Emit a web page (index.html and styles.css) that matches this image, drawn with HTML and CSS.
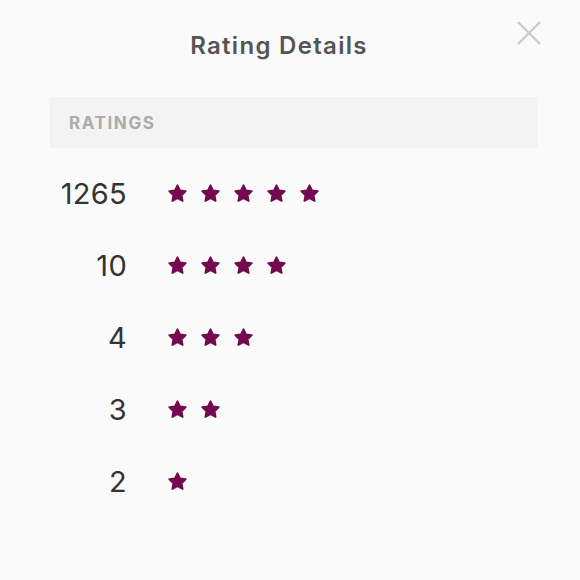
FILE: index.html
```html
<!DOCTYPE html>
<html>
<head>
<meta charset="utf-8">
<link rel="stylesheet" href="styles.css">
</head>
<body>
<svg width="0" height="0" class="defs">
  <defs>
    <symbol id="star" viewBox="0 0 24 24">
      <path d="M12 2.5l2.9 6 6.6.9-4.8 4.6 1.2 6.6L12 17.4l-5.9 3.2 1.2-6.6-4.8-4.6 6.6-.9z" stroke-width="2" stroke-linejoin="round"/>
    </symbol>
  </defs>
</svg>
<div class="modal">
  <div class="modal-head">
    <h1 class="title">Rating Details</h1>
    <button class="close" aria-label="Close">
      <svg width="26" height="26" viewBox="0 0 26 26"><path d="M2 2 L24 24 M24 2 L2 24" stroke="#c8c8c8" stroke-width="2" fill="none"/></svg>
    </button>
  </div>
  <div class="section-bar">RATINGS</div>
  <div class="rows">
    <div class="row"><span class="count">1265</span><span class="stars"><svg class="star"><use href="#star"/></svg><svg class="star"><use href="#star"/></svg><svg class="star"><use href="#star"/></svg><svg class="star"><use href="#star"/></svg><svg class="star"><use href="#star"/></svg></span></div>
    <div class="row"><span class="count">10</span><span class="stars"><svg class="star"><use href="#star"/></svg><svg class="star"><use href="#star"/></svg><svg class="star"><use href="#star"/></svg><svg class="star"><use href="#star"/></svg></span></div>
    <div class="row"><span class="count">4</span><span class="stars"><svg class="star"><use href="#star"/></svg><svg class="star"><use href="#star"/></svg><svg class="star"><use href="#star"/></svg></span></div>
    <div class="row"><span class="count">3</span><span class="stars"><svg class="star"><use href="#star"/></svg><svg class="star"><use href="#star"/></svg></span></div>
    <div class="row"><span class="count">2</span><span class="stars"><svg class="star"><use href="#star"/></svg></span></div>
  </div>
</div>
</body>
</html>
```
FILE: styles.css
```css
html, body {
  margin: 0;
  padding: 0;
  background: #fafafa;
}
body {
  font-family: Inter, "Liberation Sans", sans-serif;
  width: 580px;
  height: 580px;
  overflow: hidden;
}
.defs {
  position: absolute;
  width: 0;
  height: 0;
}
.modal {
  position: relative;
  padding: 0 42px 0 50px;
}
.modal-head {
  height: 97px;
  display: flex;
  align-items: flex-start;
  justify-content: center;
  padding-right: 30px;
}
.title {
  margin: 32px 0 0 0;
  font-size: 24px;
  font-weight: 600;
  color: #555;
  letter-spacing: 1.3px;
  line-height: 28px;
}
.close {
  position: absolute;
  top: 20px;
  right: 38px;
  width: 26px;
  height: 26px;
  padding: 0;
  border: 0;
  background: none;
}
.close svg { display: block; }
.section-bar {
  height: 51px;
  background: #f3f3f3;
  display: flex;
  align-items: center;
  padding-left: 19px;
  font-size: 17px;
  font-weight: 700;
  color: #ababab;
  letter-spacing: 1.6px;
}
.rows {
  padding-top: 9px;
}
.row {
  height: 72px;
  display: flex;
  align-items: center;
}
.count {
  width: 77px;
  text-align: right;
  font-size: 29px;
  font-weight: 400;
  color: #333;
  letter-spacing: 0.3px;
}
.stars {
  display: flex;
  gap: 12px;
  margin-left: 40px;
}
.star {
  width: 21px;
  height: 21px;
  fill: #730a50;
  stroke: #730a50;
}
```
